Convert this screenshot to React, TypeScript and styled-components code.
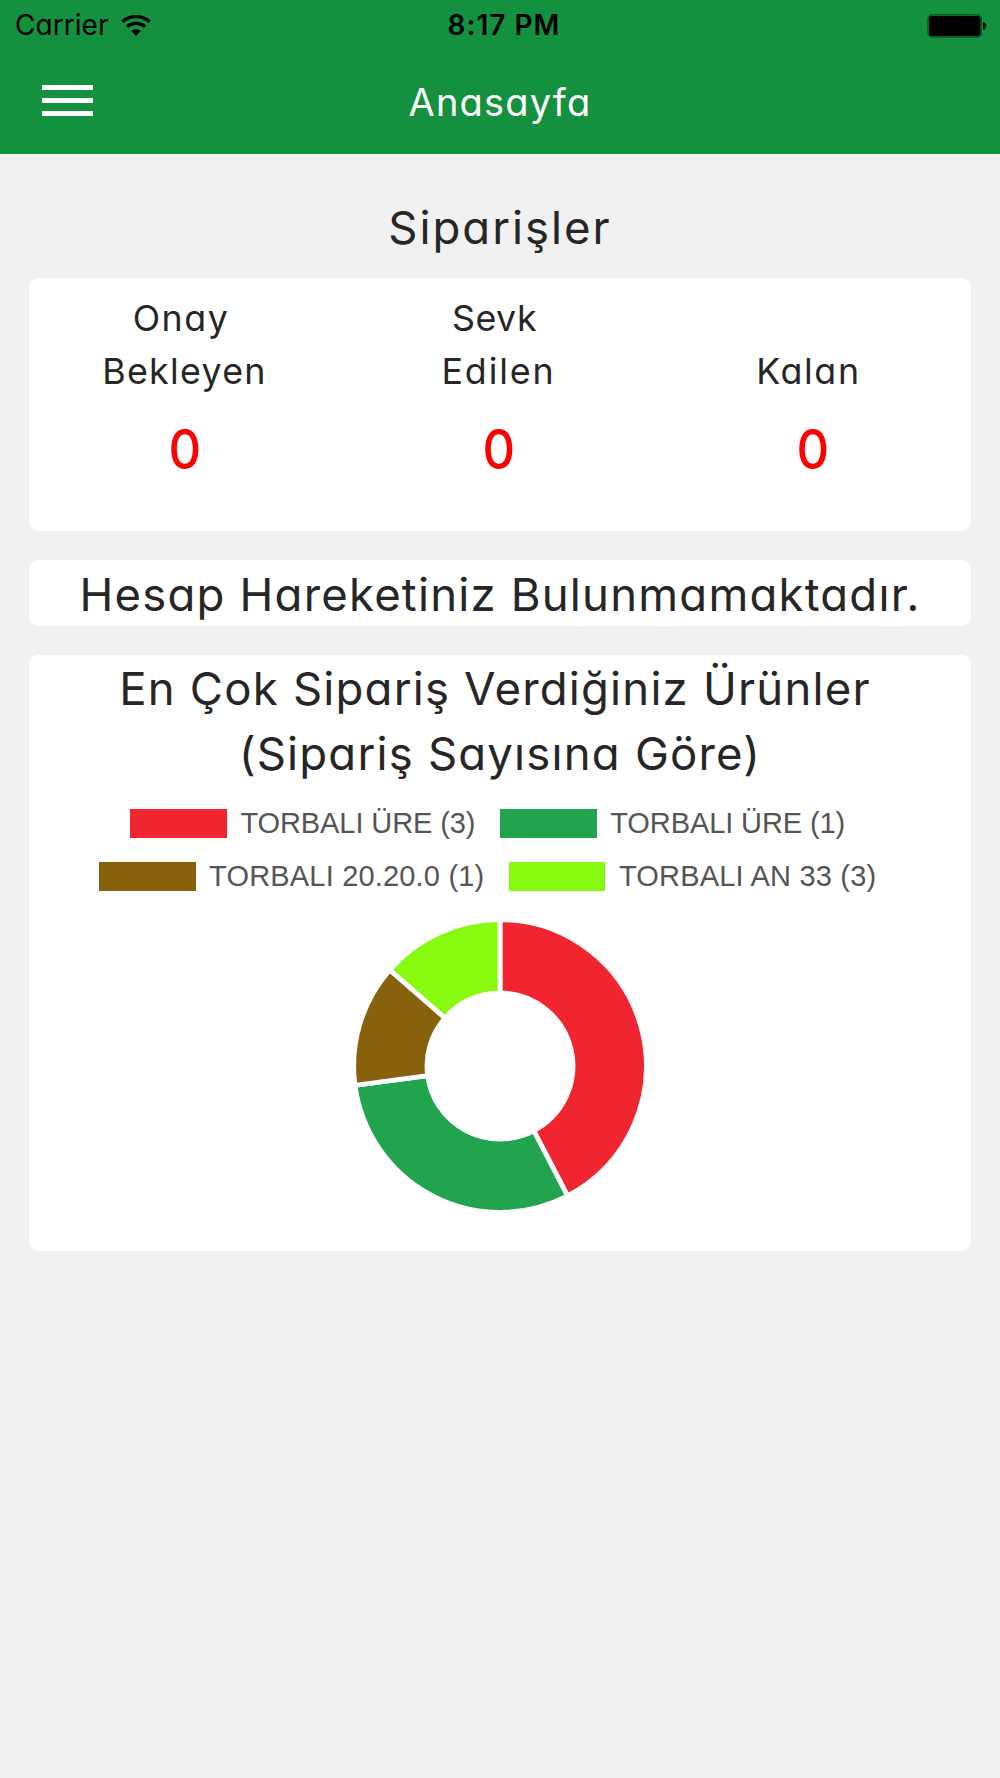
import React from "react";
import styled, { createGlobalStyle } from "styled-components";

const GlobalStyle = createGlobalStyle`
  * { box-sizing: border-box; }
  body { margin: 0; background: #f1f1f1; }
`;

const Screen = styled.div`
  width: 1000px;
  height: 1778px;
  background: #f1f1f1;
  color: #262626;
  font-family: Inter, "Open Sans", sans-serif;
  font-feature-settings: "cv11";
  overflow: hidden;
`;

const Header = styled.header`
  height: 154.4px;
  background: #14913e;
`;

const StatusBar = styled.div`
  display: grid;
  grid-template-columns: 1fr auto 1fr;
  align-items: center;
  height: 50px;
  padding: 0 13px 0 15px;
  color: #000;
  line-height: 51px;
`;

const Carrier = styled.div`
  display: flex;
  align-items: center;
  gap: 12px;
  font-size: 28px;
  font-weight: 400;
  letter-spacing: 0.05px;
`;

const Clock = styled.div`
  font-size: 28px;
  font-weight: 600;
  letter-spacing: 1px;
  padding-left: 6px;
`;

const StatusIcon = styled.svg`
  display: block;
`;

const BatteryIcon = styled(StatusIcon)`
  justify-self: end;
`;

const NavBar = styled.div`
  display: grid;
  grid-template-columns: 1fr auto 1fr;
  align-items: center;
  height: 104px;
  padding: 0 42px;
`;

const MenuButton = styled.button`
  display: flex;
  flex-direction: column;
  gap: 8.2px;
  width: 51px;
  margin-bottom: 3px;
  padding: 0;
  border: 0;
  background: none;
`;

const MenuLine = styled.span`
  height: 4.6px;
  background: #fff;
`;

const PageTitle = styled.h1`
  margin: 0;
  color: #fff;
  font-size: 38px;
  font-weight: 400;
  line-height: 104px;
  letter-spacing: 1.2px;
`;

const Content = styled.main`
  display: flex;
  flex-direction: column;
  padding: 40.6px 29px 0;
`;

const Heading = styled.h2<{ $spacing: number }>`
  margin: 0;
  font-size: 45.5px;
  font-weight: 400;
  line-height: 65.5px;
  letter-spacing: ${(p) => p.$spacing}px;
  text-align: center;
  white-space: nowrap;
`;

const WrappedLine = styled.span<{ $trail: number }>`
  display: block;
  padding-right: ${(p) => p.$trail}px;
`;

const Card = styled.section<{ $height: number; $top: number }>`
  height: ${(p) => p.$height}px;
  margin-top: ${(p) => p.$top}px;
  border-radius: 9px;
  background: #fff;
`;

const OrderCard = styled(Card)`
  display: grid;
  grid-template-columns: repeat(3, 314px);
  align-items: start;
  padding-top: 14px;
`;

const Stat = styled.div`
  display: flex;
  flex-direction: column;
  align-items: center;
  padding-right: 3px;
`;

const StatLabel = styled.div`
  display: flex;
  flex-direction: column;
  justify-content: flex-end;
  height: 106px;
`;

const LabelLine = styled(WrappedLine)<{ $spacing: number }>`
  font-size: 35.8px;
  line-height: 53px;
  letter-spacing: ${(p) => p.$spacing}px;
  text-align: center;
`;

const StatValue = styled.strong`
  margin-top: 13px;
  color: #f00;
  font-size: 55px;
  font-weight: 500;
  line-height: 77px;
  transform: scaleX(0.92);
`;

const Message = styled(Card)`
  padding-top: 2px;
`;

const ChartCard = styled(Card)`
  padding-top: 1px;
`;

const Legend = styled.ul`
  display: flex;
  flex-direction: column;
  gap: 24px;
  margin: 22px 0 0;
  padding: 0;
  list-style: none;
`;

const LegendRow = styled.li<{ $left: number }>`
  display: flex;
  height: 29px;
  padding-left: ${(p) => p.$left}px;
`;

const LegendItem = styled.div<{ $width: number }>`
  display: flex;
  align-items: center;
  gap: 13.5px;
  flex: none;
  width: ${(p) => p.$width}px;
`;

const Swatch = styled.span<{ $color: string }>`
  flex: none;
  width: 96.6px;
  height: 29px;
  background: ${(p) => p.$color};
`;

const LegendText = styled.span<{ $spacing: number }>`
  color: #555;
  font-family: "Liberation Sans", Helvetica, sans-serif;
  font-size: 29px;
  line-height: 29px;
  letter-spacing: ${(p) => p.$spacing}px;
  white-space: nowrap;
`;

const Chart = styled.svg`
  display: block;
  margin: 25px auto 0;
`;

const stats = [
  {
    lines: [
      { text: "Onay", spacing: 1.5, trail: 7 },
      { text: "Bekleyen", spacing: 1.3, trail: 0 },
    ],
  },
  {
    lines: [
      { text: "Sevk", spacing: 0.5, trail: 8 },
      { text: "Edilen", spacing: 1.9, trail: 0 },
    ],
  },
  { lines: [{ text: "Kalan", spacing: 1.6, trail: 8 }] },
];

const legendRows = [
  {
    left: 101.4,
    items: [
      { text: "TORBALI ÜRE (3)", color: "#f0252f", width: 369.8, spacing: -0.1 },
      { text: "TORBALI ÜRE (1)", color: "#22a34d", width: 369.8, spacing: -0.1 },
    ],
  },
  {
    left: 70,
    items: [
      { text: "TORBALI 20.20.0 (1)", color: "#88610c", width: 409.8, spacing: 0.18 },
      { text: "TORBALI AN 33 (3)", color: "#87fa0f", width: 380, spacing: 0.2 },
    ],
  },
];

const slices = [
  { from: 0, to: 152.5, color: "#f0252f" },
  { from: 152.5, to: 262.4, color: "#22a34d" },
  { from: 262.4, to: 311.1, color: "#88610c" },
  { from: 311.1, to: 360, color: "#87fa0f" },
];

const OUTER = 146.3;
const INNER = 73;

function point(radius: number, degrees: number) {
  const a = (degrees * Math.PI) / 180;
  return `${(radius * Math.sin(a)).toFixed(2)} ${(-radius * Math.cos(a)).toFixed(2)}`;
}

function slicePath(from: number, to: number) {
  return `M${point(OUTER, from)}A${OUTER} ${OUTER} 0 0 1 ${point(OUTER, to)}L${point(INNER, to)}A${INNER} ${INNER} 0 0 0 ${point(INNER, from)}Z`;
}

export default function App() {
  return (
    <Screen>
      <GlobalStyle />
      <Header>
        <StatusBar>
          <Carrier>
            Carrier
            <StatusIcon width="30" height="22" viewBox="0 0 30 22">
              <g fill="none" stroke="#000" strokeWidth="3.3">
                <path d="M1.3 6.8C9 0 21 0 28.7 6.8" />
                <path d="M5.9 11.8C11.2 7.3 18.8 7.3 24.1 11.8" />
              </g>
              <path d="M10.2 16C13 13.6 17 13.6 19.8 16L15 21Z" />
            </StatusIcon>
          </Carrier>
          <Clock>8:17 PM</Clock>
          <BatteryIcon width="60" height="24" viewBox="0 0 60 24">
            <rect x="1" y="0.9" width="53.4" height="22" rx="4" fill="none" stroke="#07451b" strokeWidth="1.1" />
            <rect x="2" y="1.9" width="51.4" height="20" rx="2.6" />
            <path d="M56 8C60.2 8.8 60.2 15.2 56 16Z" />
          </BatteryIcon>
        </StatusBar>
        <NavBar>
          <MenuButton aria-label="Menü">
            <MenuLine />
            <MenuLine />
            <MenuLine />
          </MenuButton>
          <PageTitle>Anasayfa</PageTitle>
        </NavBar>
      </Header>
      <Content>
        <Heading $spacing={2}>Siparişler</Heading>
        <OrderCard $height={253.5} $top={17.3}>
          {stats.map((stat) => (
            <Stat key={stat.lines[0].text}>
              <StatLabel>
                {stat.lines.map((line) => (
                  <LabelLine key={line.text} $spacing={line.spacing} $trail={line.trail}>
                    {line.text}
                  </LabelLine>
                ))}
              </StatLabel>
              <StatValue>0</StatValue>
            </Stat>
          ))}
        </OrderCard>
        <Message $height={66} $top={28.7}>
          <Heading $spacing={1.2}>Hesap Hareketiniz Bulunmamaktadır.</Heading>
        </Message>
        <ChartCard $height={596} $top={29}>
          <Heading $spacing={1.2}>
            <WrappedLine $trail={10}>En Çok Sipariş Verdiğiniz Ürünler</WrappedLine>
            <WrappedLine $trail={0}>(Sipariş Sayısına Göre)</WrappedLine>
          </Heading>
          <Legend>
            {legendRows.map((row) => (
              <LegendRow key={row.left} $left={row.left}>
                {row.items.map((item) => (
                  <LegendItem key={item.text} $width={item.width}>
                    <Swatch $color={item.color} />
                    <LegendText $spacing={item.spacing}>{item.text}</LegendText>
                  </LegendItem>
                ))}
              </LegendRow>
            ))}
          </Legend>
          <Chart width="300" height="300" viewBox="-150 -150 300 300">
            {slices.map((s) => (
              <path key={s.from} d={slicePath(s.from, s.to)} fill={s.color} stroke="#fff" strokeWidth="4.8" />
            ))}
          </Chart>
        </ChartCard>
      </Content>
    </Screen>
  );
}
